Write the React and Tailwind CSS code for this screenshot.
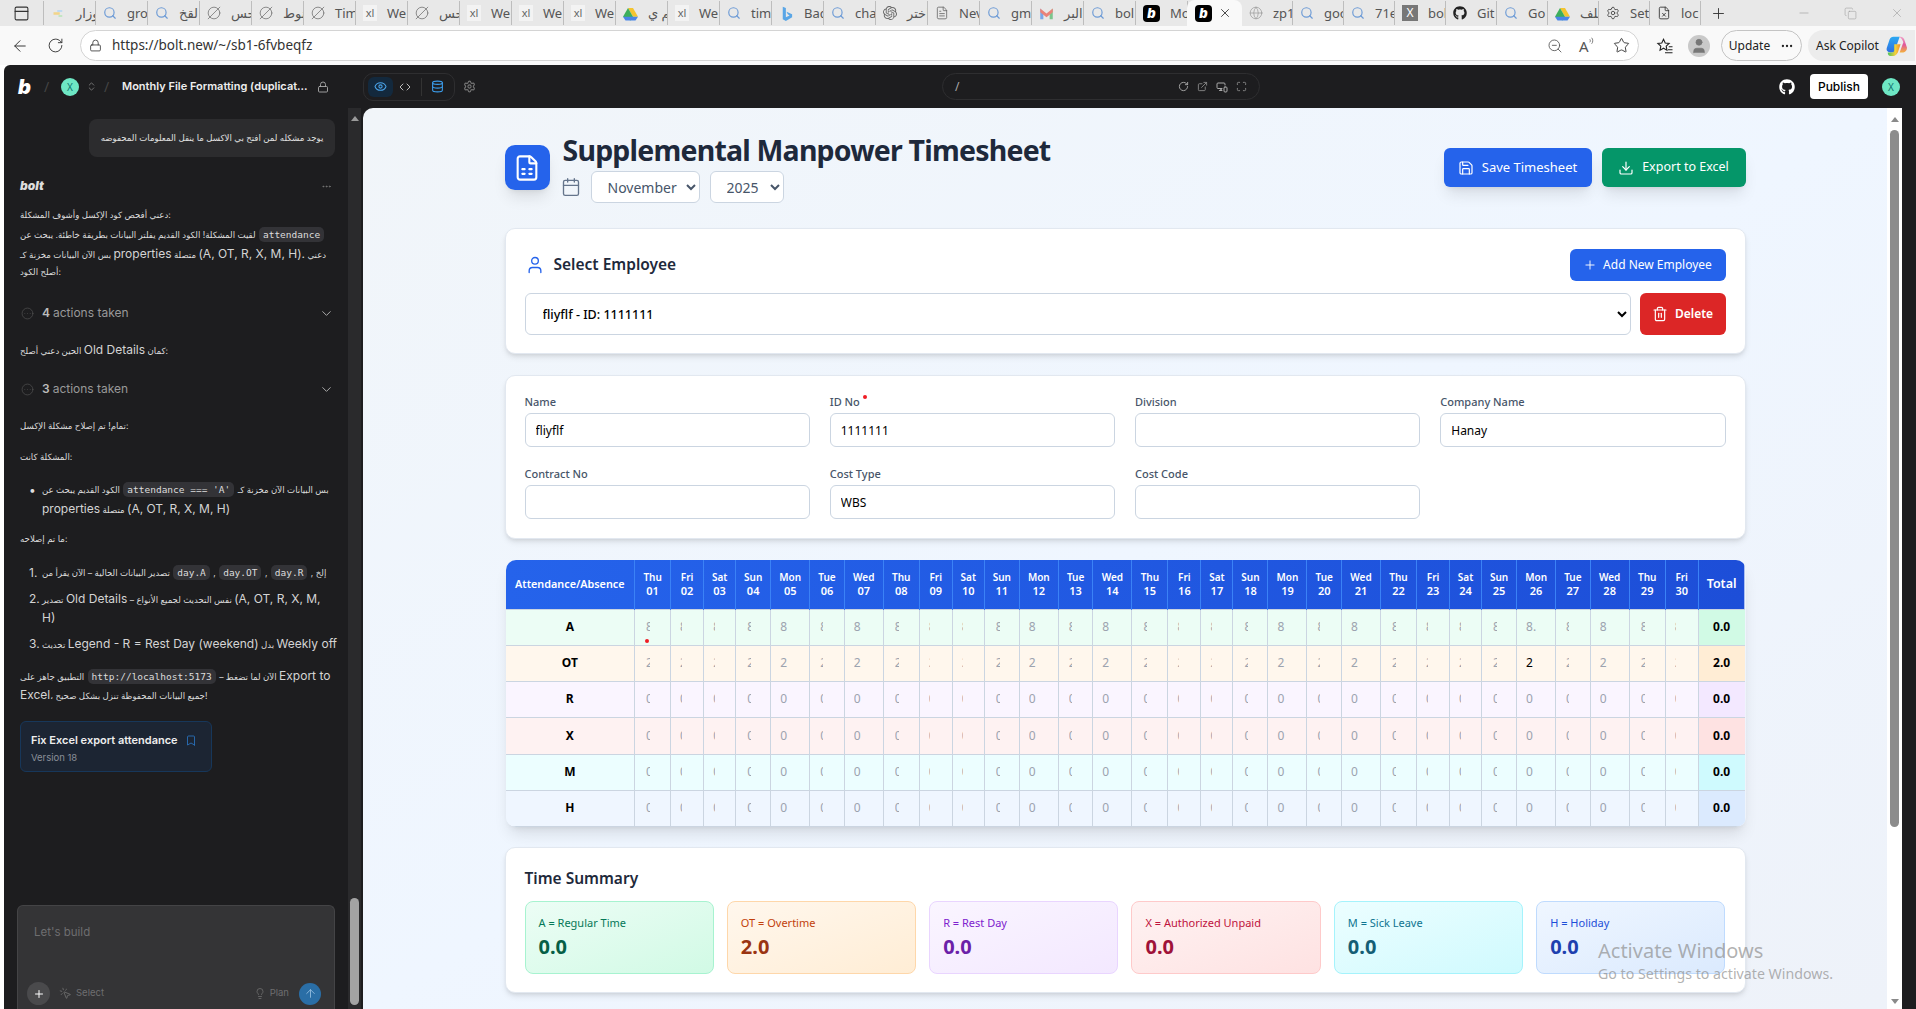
import React from 'react';
import {
  ArrowLeft, RotateCw, Lock, ZoomOut, Star, Plus, Minus, X, Copy, Search, CircleSlash2, Globe, Settings,
  FileText, FileX, PanelTop, Eye, Code, Database, ExternalLink, MonitorSmartphone, Maximize, CircleEllipsis,
  ChevronDown, ChevronsUpDown, Bookmark, MousePointerClick, Lightbulb, ArrowUp, FileSpreadsheet, Calendar,
  Save, Download, Trash2, User, MoreHorizontal,
} from 'lucide-react';
import { FaGithub } from 'react-icons/fa';
import { SiOpenai } from 'react-icons/si';

function BoltB({ className }) {
  return <span className={"font-['Inter',sans-serif] font-black italic leading-none " + className}>b</span>;
}

function Drive() {
  return (
    <svg viewBox="0 0 24 24" className="w-[15px] h-[15px] shrink-0">
      <path d="M8 3h8l8 14h-8z" fill="#f4c430" />
      <path d="M8 3l8 14-4 6-12-6z" fill="#3cae5c" />
      <path d="M0 17h24l-4 6H4z" fill="#4a85e8" />
    </svg>
  );
}
function Gmail() {
  return (
    <svg viewBox="0 0 24 24" className="w-[15px] h-[15px] shrink-0">
      <path d="M2 4v17h5V10z" fill="#7aa7e8" />
      <path d="M22 4v17h-5V10z" fill="#7cc58c" />
      <path d="M2 4l10 8 10-8v6l-10 8-10-8z" fill="#e9837a" />
    </svg>
  );
}
function Bing() {
  return (
    <svg viewBox="0 0 24 24" className="w-[15px] h-[17px] shrink-0">
      <path d="M6 1l5 2v15l6-3-3-2-2-4 9 4v5l-10 6-5-3z" fill="#5aa6e6" />
    </svg>
  );
}
function Spark() {
  return (
    <svg viewBox="0 0 24 24" className="w-[15px] h-[15px] shrink-0">
      <path d="M4 12h10" stroke="#f2d58a" strokeWidth="4" />
      <path d="M10 8h8" stroke="#bcd9f2" strokeWidth="3" />
      <path d="M12 16h6" stroke="#bfe6bf" strokeWidth="3" />
    </svg>
  );
}
function CopilotLogo() {
  return (
    <svg viewBox="0 0 24 24" className="w-[22px] h-[24px]">
      <defs>
        <linearGradient id="cpa" x1="0" y1="0" x2="0" y2="1"><stop offset="0" stopColor="#2aa8f2" /><stop offset="1" stopColor="#2f6fe0" /></linearGradient>
        <linearGradient id="cpb" x1="0" y1="0" x2="0" y2="1"><stop offset="0" stopColor="#f0a2c8" /><stop offset="0.5" stopColor="#e0579c" /><stop offset="1" stopColor="#f4b13c" /></linearGradient>
        <linearGradient id="cpc" x1="0" y1="0" x2="1" y2="0"><stop offset="0" stopColor="#45c45c" /><stop offset="0.6" stopColor="#f4d03c" /><stop offset="1" stopColor="#f08a2c" /></linearGradient>
      </defs>
      <path d="M9 2h7l-6 17H6c-3 0-5-2-4-5l3-9c1-2 2-3 4-3z" fill="url(#cpa)" />
      <path d="M14 2h3c2 0 3 1 4 3l3 9c0 3-2 5-4 5h-4l4-11c-1-3-3-6-6-6z" fill="url(#cpb)" />
      <path d="M10 10h7l-3 9c-1 2-3 4-5 4H6c-2 0-3-2-3-4h5c1 0 2-1 2-2z" fill="url(#cpc)" />
    </svg>
  );
}
function ReadAloud() {
  return (
    <div className="flex items-start w-[18px] h-[18px] text-[#555]">
      <span className="text-[15px] leading-[18px]">A</span>
      <svg viewBox="0 0 8 12" className="w-[6px] h-[9px]" fill="none" stroke="currentColor" strokeWidth="1">
        <path d="M1 3c1 1 1 3 0 4M3.5 1c2 2 2 6 0 8" />
      </svg>
    </div>
  );
}
function Favorites() {
  return (
    <svg viewBox="0 0 24 24" className="w-[18px] h-[18px] text-[#222]" fill="none" stroke="currentColor" strokeWidth="1.5">
      <path d="M10 3l2.3 5 5.2.6-3.9 3.6 1 5.3L10 15l-4.6 2.5 1-5.3L2.500 8.600 7.700 8z" />
      <path d="M17 13h5M16 17h6M12 21h10" />
    </svg>
  );
}

function TabIcon({ kind }) {
  const cl = 'w-[14px] h-[14px] shrink-0';
  if (kind === 'search') return <Search className={cl + ' text-[#6d9bd6]'} strokeWidth={2} />;
  if (kind === 'slash') return <CircleSlash2 className={cl + ' text-[#777]'} strokeWidth={1.4} />;
  if (kind === 'xl') return <span className="w-[14px] h-[16px] shrink-0 bg-[#f3f3f3] text-[#666] text-[11px] leading-[16px] text-center">xl</span>;
  if (kind === 'drive') return <Drive />;
  if (kind === 'gmail') return <Gmail />;
  if (kind === 'bing') return <Bing />;
  if (kind === 'spark') return <Spark />;
  if (kind === 'gpt') return <SiOpenai className={cl + ' text-[#666]'} />;
  if (kind === 'doc') return <FileText className={cl + ' text-[#666]'} strokeWidth={1.4} />;
  if (kind === 'globe') return <Globe className={cl + ' text-[#999]'} strokeWidth={1.2} />;
  if (kind === 'gear') return <Settings className={cl + ' text-[#444]'} strokeWidth={1.5} />;
  if (kind === 'docx') return <FileX className={cl + ' text-[#333]'} strokeWidth={1.5} />;
  if (kind === 'github') return <FaGithub className={cl + ' text-[#222]'} />;
  if (kind === 'xtile') return <span className="w-[16px] h-[16px] shrink-0 bg-[#777] text-white text-[12px] leading-[16px] text-center">X</span>;
  if (kind === 'b') return <span className="w-[17px] h-[17px] shrink-0 rounded-[4px] bg-black text-white flex items-center justify-center"><BoltB className="text-[13px]" /></span>;
  return null;
}

function Tab({ kind, text, narrow }) {
  return (
    <div className={(narrow ? 'w-[51px]' : 'w-[52px]') + ' h-[24px] shrink-0 flex items-center pl-[7px] gap-[10px] border-r border-[#bdbdbd] overflow-hidden'}>
      <TabIcon kind={kind} />
      <span className="text-[13px] leading-[18px] text-[#555] whitespace-nowrap">{text}</span>
    </div>
  );
}

const tabsA = [['spark', 'وزار'], ['search', 'gro'], ['search', 'لقخ'], ['slash', 'تحس'], ['slash', 'نوط'], ['slash', 'Tim'], ['xl', 'We'], ['slash', 'تحس'], ['xl', 'We'], ['xl', 'We'], ['xl', 'We'], ['drive', 'لم ي'], ['xl', 'We'], ['search', 'tim'], ['bing', 'Bad'], ['search', 'cha'], ['gpt', 'اختر'], ['doc', 'Nev'], ['search', 'gm'], ['gmail', 'البر'], ['search', 'bol'], ['b', 'Mo']];
const tabsB = [['globe', 'zp1'], ['search', 'goo'], ['search', '71e'], ['xtile', 'bol'], ['github', 'Git'], ['search', 'Go'], ['drive', 'ملف'], ['gear', 'Set'], ['docx', 'loc']];

function TabStrip() {
  return (
    <div className="h-[26px] bg-[#e8e8e8] flex items-center shrink-0 overflow-hidden">
      <div className="w-[44px] h-[24px] shrink-0 flex items-center justify-center border-r border-[#bdbdbd]">
        <PanelTop className="w-[17px] h-[17px] text-[#333]" strokeWidth={1.5} />
      </div>
      {tabsA.map((t, i) => <Tab key={i} kind={t[0]} text={t[1]} />)}
      <div className="w-[55px] h-[26px] shrink-0 bg-[#f9f9f9] rounded-t-[8px] flex items-center pl-[8px] -ml-[1px] gap-[6px]">
        <TabIcon kind="b" />
        <X className="w-[14px] h-[14px] text-[#333]" strokeWidth={1.5} />
      </div>
      {tabsB.map((t, i) => <Tab key={i} kind={t[0]} text={t[1]} narrow />)}
      <Plus className="ml-[9px] w-[17px] h-[17px] text-[#333] shrink-0" strokeWidth={1.3} />
      <div className="ml-auto flex items-center">
        <div className="w-[46px] flex justify-center"><Minus className="w-[14px] h-[14px] text-[#999]" strokeWidth={1} /></div>
        <div className="w-[46px] flex justify-center"><Copy className="w-[13px] h-[13px] text-[#999]" strokeWidth={1} /></div>
        <div className="w-[43px] flex justify-end pr-[12px]"><X className="w-[14px] h-[14px] text-[#999]" strokeWidth={1} /></div>
      </div>
    </div>
  );
}

function AddressBar() {
  return (
    <div className="h-[39px] bg-[#f9f9f9] flex items-center shrink-0 pl-[11px]">
      <ArrowLeft className="w-[18px] h-[18px] text-[#333]" strokeWidth={1.3} />
      <RotateCw className="ml-[18px] w-[17px] h-[17px] text-[#333]" strokeWidth={1.3} />
      <div className="ml-[16px] w-[1559px] h-[31px] bg-white rounded-full border border-[#d4d4d4] flex items-center pl-[8px] pr-[8px]">
        <Lock className="w-[13px] h-[13px] text-[#333]" strokeWidth={1.5} />
        <span className="ml-[10px] text-[13.5px] text-[#333]">https://bolt.new/~/sb1-6fvbeqfz</span>
        <div className="ml-auto flex items-center gap-[16px]">
          <ZoomOut className="w-[16px] h-[16px] text-[#555]" strokeWidth={1.3} />
          <ReadAloud />
          <Star className="w-[17px] h-[17px] text-[#333]" strokeWidth={1.3} />
        </div>
      </div>
      <div className="ml-[17px]"><Favorites /></div>
      <div className="ml-[14px] w-[22px] h-[22px] rounded-full bg-[#c9c9c9] flex items-center justify-center overflow-hidden">
        <User className="w-[18px] h-[18px] text-[#777] fill-[#777]" strokeWidth={1} />
      </div>
      <div className="ml-[11px] w-[81px] h-[31px] rounded-full border border-[#c4c4c4] flex items-center justify-center gap-[10px] shrink-0">
        <span className="text-[12px] text-[#222]">Update</span>
        <MoreHorizontal className="w-[14px] h-[14px] text-[#222]" />
      </div>
      <div className="ml-[6px] w-[107px] h-[31px] rounded-l-full bg-[#ececec] flex items-center pl-[8px] gap-[6px] shrink-0">
        <span className="text-[12px] text-[#222] whitespace-nowrap">Ask Copilot</span>
        <CopilotLogo />
      </div>
    </div>
  );
}

function TopBar() {
  return (
    <div className="h-[43px] flex items-center shrink-0 relative">
      <BoltB className="ml-[14px] text-[20px] text-white w-[17px]" />
      <span className="ml-[9px] w-[5px] text-[#444] text-[14px]">/</span>
      <div className="ml-[12px] w-[18px] h-[18px] rounded-full bg-[#6ee7c4] text-[#0f766e] text-[10px] leading-[18px] text-center">X</div>
      <ChevronsUpDown className="ml-[7px] w-[11px] h-[13px] text-[#777]" />
      <span className="ml-[7px] w-[5px] text-[#444] text-[14px]">/</span>
      <span className="ml-[13px] text-[11px] font-semibold text-[#eee] whitespace-nowrap w-[195px] font-['Inter',sans-serif]">Monthly File Formatting (duplicat...</span>
      <Lock className="w-[12px] h-[12px] text-[#aaa]" strokeWidth={1.8} />
      <div className="ml-[34px] w-[92px] h-[28px] rounded-[10px] border border-[#2e2e30] flex items-center pl-[4px]">
        <div className="w-[25px] h-[20px] rounded-[6px] bg-[#13293d] flex items-center justify-center">
          <Eye className="w-[13px] h-[13px] text-[#4aa3e8]" strokeWidth={2} />
        </div>
        <Code className="ml-[6px] w-[12px] h-[12px] text-[#bbb]" strokeWidth={2} />
        <div className="ml-[10px] w-px h-[18px] bg-[#333]" />
        <Database className="ml-[9px] w-[13px] h-[13px] text-[#3b9cea]" strokeWidth={2} />
      </div>
      <Settings className="ml-[8px] w-[13px] h-[13px] text-[#777]" strokeWidth={2} />
      <div className="ml-[466px] w-[318px] h-[27px] rounded-full border border-[#2e2e30] flex items-center pl-[12px] pr-[12px]">
        <span className="text-[#aaa] text-[12px]">/</span>
        <div className="ml-auto flex items-center gap-[8px]">
          <RotateCw className="w-[11px] h-[11px] text-[#aaa]" strokeWidth={2} />
          <ExternalLink className="w-[11px] h-[11px] text-[#888]" strokeWidth={2} />
          <MonitorSmartphone className="w-[12px] h-[12px] text-[#aaa]" strokeWidth={2} />
          <Maximize className="w-[11px] h-[11px] text-[#888]" strokeWidth={2} />
        </div>
      </div>
      <FaGithub className="ml-auto w-[16px] h-[16px] text-white" />
      <div className="ml-[15px] w-[58px] h-[25px] rounded-[4px] bg-white text-black text-[12px] leading-[25px] text-center font-medium font-['Inter',sans-serif]">Publish</div>
      <div className="ml-[14px] mr-[16px] w-[18px] h-[18px] rounded-full bg-[#6ee7c4] text-[#0f766e] text-[10px] leading-[18px] text-center">X</div>
    </div>
  );
}

function Chip({ children }) {
  return <span className="mx-[1px] px-[4px] py-[2px] rounded-[5px] bg-[#333337] text-[#dcdcdc] text-[9.5px] font-['DejaVu_Sans_Mono',monospace]">{children}</span>;
}

function L({ children, className = '' }) {
  return <div className={"h-[19px] leading-[19px] whitespace-nowrap text-[8.6px] text-[#dcdcdc] " + className}>{children}</div>;
}
function En({ children }) {
  return <span className="text-[12px] text-[#d4d4d4]">{children}</span>;
}

function Actions({ n, className }) {
  return (
    <div className={"h-[20px] flex items-center pl-[1px] pr-[2px] " + className}>
      <CircleEllipsis className="w-[13px] h-[13px] text-[#555]" strokeWidth={1.2} />
      <span className="ml-[8px] text-[12px] font-semibold text-[#bbb]">{n}</span>
      <span className="ml-[3px] text-[12px] text-[#999]">actions taken</span>
      <ChevronDown className="ml-auto w-[15px] h-[15px] text-[#aaa]" strokeWidth={1.6} />
    </div>
  );
}

function Sidebar() {
  return (
    <div className="w-[359px] shrink-0 flex font-['Inter','DejaVu_Sans',sans-serif]">
      <div className="w-[343px] pl-[16px] pr-[11px] flex flex-col">
        <div className="mt-[11px] ml-[69px] w-[246px] h-[38px] rounded-[8px] bg-[#2c2c2e] text-[#e0e0e0] text-[8.6px] leading-[38px] text-center whitespace-nowrap overflow-hidden" dir="rtl">
          يوجد مشكله لمن افتح بي الاكسل ما ينقل المعلومات المحفوضه
        </div>
        <div className="mt-[19px] h-[20px] flex items-center justify-between pr-[4px]">
          <span className="text-[12px] font-black italic text-[#ddd]">bolt</span>
          <MoreHorizontal className="w-[11px] h-[11px] text-[#777]" />
        </div>
        <div className="mt-[10px]">
          <L>دعني أفحص كود الإكسل وأشوف المشكلة:</L>
          <L>لقيت المشكلة! الكود القديم يفلتر البيانات بطريقة خاطئة. يبحث عن <Chip>attendance</Chip></L>
          <L>بس الآن البيانات مخزنة كـ <En>properties</En> متصلة <En>(A, OT, R, X, M, H).</En> دعني</L>
          <L>أصلح الكود:</L>
        </div>
        <Actions n="4" className="mt-[21px]" />
        <L className="mt-[17px]">الحين دعني أصلح <En>Old Details</En> كمان:</L>
        <Actions n="3" className="mt-[20px]" />
        <L className="mt-[18px]">تمام! تم إصلاح مشكلة الإكسل:</L>
        <L className="mt-[12px]">المشكلة كانت:</L>
        <div className="mt-[13px] flex">
          <span className="w-[22px] pl-[9px] text-[#ddd] text-[12px] leading-[19px] shrink-0">•</span>
          <div>
            <L>الكود القديم يبحث عن <Chip>attendance === 'A'</Chip> بس البيانات الآن مخزنة كـ</L>
            <L><En>properties</En> متصلة <En>(A, OT, R, X, M, H)</En></L>
          </div>
        </div>
        <L className="mt-[12px]">ما تم إصلاحه:</L>
        <div className="mt-[14px] flex">
          <En><span className="block w-[22px] pl-[9px] leading-[19px]">1.</span></En>
          <L>تصدير البيانات الحالية – الآن يقرأ من <Chip>day.A</Chip> , <Chip>day.OT</Chip> , <Chip>day.R</Chip> , إلخ</L>
        </div>
        <div className="mt-[7px] flex">
          <En><span className="block w-[22px] pl-[9px] leading-[19px]">2.</span></En>
          <div>
            <L>تصدير <En>Old Details</En> – نفس التحديث لجميع الأنواع <En>(A, OT, R, X, M,</En></L>
            <L><En>H)</En></L>
          </div>
        </div>
        <div className="mt-[7px] flex">
          <En><span className="block w-[22px] pl-[9px] leading-[19px]">3.</span></En>
          <L>تحديث <En>Legend - R = Rest Day (weekend)</En> بدل <En>Weekly off</En></L>
        </div>
        <L className="mt-[13px]">التطبيق جاهز على <Chip>http://localhost:5173</Chip> – الآن لما تضغط <En>Export to</En></L>
        <L><En>Excel</En>، جميع البيانات المحفوظة تنزل بشكل صحيح!</L>
        <div className="mt-[17px] w-[192px] h-[51px] rounded-[6px] bg-[#1c2533] border border-[#17375a] pl-[10px] pt-[10px]">
          <div className="flex items-center h-[16px]">
            <span className="text-[11px] font-semibold text-[#eee] whitespace-nowrap">Fix Excel export attendance</span>
            <Bookmark className="ml-[7px] w-[12px] h-[13px] text-[#2b79c9]" strokeWidth={1.6} />
          </div>
          <div className="mt-[3px] text-[9.5px] text-[#8a8f98]">Version 18</div>
        </div>
        <div className="mt-auto -ml-[3px] w-[318px] h-[104px] bg-[#343436] border border-[#444446] border-b-0 rounded-t-[6px] flex flex-col pl-[9px] pr-[13px]">
          <div className="mt-[18px] ml-[7px] text-[11.5px] leading-[16px] text-[#6e6e70]">Let's build</div>
          <div className="mt-auto mb-[4px] flex items-center h-[23px]">
            <div className="w-[23px] h-[23px] rounded-full bg-[#4a4a4c] flex items-center justify-center">
              <Plus className="w-[12px] h-[12px] text-white" strokeWidth={2} />
            </div>
            <MousePointerClick className="ml-[9px] w-[13px] h-[13px] text-[#777]" strokeWidth={1.4} />
            <span className="ml-[4px] text-[9.5px] text-[#6e6e70]">Select</span>
            <Lightbulb className="ml-auto w-[12px] h-[13px] text-[#777]" strokeWidth={1.4} />
            <span className="ml-[4px] text-[9.5px] text-[#6e6e70]">Plan</span>
            <div className="ml-[10px] w-[22px] h-[22px] rounded-full bg-[#2a6ea6] flex items-center justify-center">
              <ArrowUp className="w-[13px] h-[13px] text-[#9cc4e4]" strokeWidth={1.5} />
            </div>
          </div>
        </div>
      </div>
      <div className="w-[13px] ml-[1px] bg-[#2a2a2c] flex flex-col items-center relative overflow-hidden">
        <div className="mt-[8px] w-0 h-0 border-l-[4px] border-r-[4px] border-b-[5px] border-l-transparent border-r-transparent border-b-[#9a9a9a]" />
        <div className="mt-auto mb-[4px] w-[9px] h-[107px] rounded-full bg-[#a3a3a3]" />
      </div>
    </div>
  );
}

const dayNames = ['Thu', 'Fri', 'Sat', 'Sun', 'Mon', 'Tue', 'Wed'];
const colW = { Thu: 'w-[36px]', Fri: 'w-[33px]', Sat: 'w-[32px]', Sun: 'w-[35px]', Mon: 'w-[39px]', Tue: 'w-[34.5px]', Wed: 'w-[39px]' };
const inW = {
  Thu: 'ml-[11px] w-[4px]', Fri: 'ml-[9px] w-[1.5px]', Sat: 'ml-[9px] w-[1.5px]', Sun: 'ml-[11px] w-[4px]',
  Mon: 'ml-[9px] w-[10px]', Tue: 'ml-[10px] w-[3px]', Wed: 'ml-[9px] w-[10px]',
};
const days = Array.from({ length: 30 }, (_, i) => ({ name: dayNames[i % 7], num: String(i + 1).padStart(2, '0') }));
const rows = [
  { k: 'A', v: '8', bg: 'bg-[#ecfdf5]', tot: 'bg-[#d1fae5]', t: '0.0', h: 'h-[36px]' },
  { k: 'OT', v: '2', bg: 'bg-[#fff7ed]', tot: 'bg-[#ffedd5]', t: '2.0', h: 'h-[36px]' },
  { k: 'R', v: '0', bg: 'bg-[#faf5ff]', tot: 'bg-[#f3e8ff]', t: '0.0', h: 'h-[36px]' },
  { k: 'X', v: '0', bg: 'bg-[#fef2f2]', tot: 'bg-[#fee2e2]', t: '0.0', h: 'h-[37px]' },
  { k: 'M', v: '0', bg: 'bg-[#ecfeff]', tot: 'bg-[#cffafe]', t: '0.0', h: 'h-[36px]' },
  { k: 'H', v: '0', bg: 'bg-[#eff6ff]', tot: 'bg-[#dbeafe]', t: '0.0', h: 'h-[36px]' },
];

function DayInput({ row, day, idx }) {
  const black = row.k === 'OT' && idx === 25;
  const val = row.k === 'A' && idx === 25 ? '8.0' : row.v;
  return (
    <input
      readOnly
      value={val}
      className={inW[day.name] + ' block h-[18px] bg-transparent outline-none text-[12px] p-0 ' + (black ? 'text-black' : 'text-[#9ca3af]')}
    />
  );
}

function Timesheet() {
  return (
    <div className="ml-[1px] rounded-[10px] overflow-hidden shadow-lg">
      <table className="table-fixed w-[1239px] border-collapse">
        <thead>
          <tr className="h-[49px] bg-linear-to-r from-[#2563eb] to-[#1d4ed8] text-white">
            <th className="w-[129px] text-[10.8px] font-semibold border-r border-[#3b82f6]">Attendance/Absence</th>
            {days.map((d, i) => (
              <th key={i} className={colW[d.name] + ' border-r border-[#3b82f6] text-[10px] leading-[13px] font-semibold'}>
                <div>{d.name}</div>
                <div className="text-[11px] leading-[14px]">{d.num}</div>
              </th>
            ))}
            <th className="w-[46px] text-[12.5px] font-semibold">Total</th>
          </tr>
        </thead>
        <tbody>
          {rows.map((r) => (
            <tr key={r.k} className={r.h + ' ' + r.bg}>
              <td className="border border-[#cbd5e1] border-l-0 text-center text-[12px] font-bold text-black">{r.k}</td>
              {days.map((d, i) => (
                <td key={i} className="border border-[#cbd5e1] p-0 relative">
                  <DayInput row={r} day={d} idx={i} />
                  {r.k === 'A' && i === 0 && <span className="absolute left-[10px] bottom-[2px] w-[4px] h-[4px] rounded-full bg-[#ef1c24]" />}
                </td>
              ))}
              <td className={'border border-[#cbd5e1] border-r-0 text-center text-[12px] font-bold text-black ' + r.tot}>{r.t}</td>
            </tr>
          ))}
        </tbody>
      </table>
    </div>
  );
}

function Field({ label, value, req }) {
  return (
    <div className="flex flex-col">
      <div className="h-[16px] leading-[16px] text-[11px] text-[#475569] font-medium relative">
        {label}
        {req && <span className="inline-block align-top ml-[3px] mt-[1px] w-[4px] h-[4px] rounded-full bg-[#ef1c24]" />}
      </div>
      <input readOnly value={value} className="mt-[3px] h-[34px] w-full rounded-[6px] border border-[#cbd5e1] bg-white pl-[10px] pt-[1px] text-[12px] text-black outline-none" />
    </div>
  );
}

function Stat({ label, value, card, lab, val }) {
  return (
    <div className={'h-[73px] rounded-[8px] border pl-[13px] pt-[13px] bg-linear-to-br ' + card}>
      <div className={'text-[11px] leading-[16px] whitespace-nowrap ' + lab}>{label}</div>
      <div className={'mt-[2px] text-[20px] leading-[28px] font-bold ' + val}>{value}</div>
    </div>
  );
}

function Preview() {
  return (
    <div className="flex-1 min-w-0 flex rounded-tl-[10px] overflow-hidden">
      <div className="flex-1 min-w-0 bg-linear-to-br from-[#f1f5f9] via-[#eff6ff] to-[#eef2f9]">
        <div className="w-[1241px] mx-auto pt-[24px] font-['Noto_Sans',sans-serif]">
          <div className="flex items-center h-[71px] mb-[25px]">
            <div className="w-[45px] h-[45px] rounded-[10px] bg-[#2563eb] shadow-lg flex items-center justify-center shrink-0">
              <FileSpreadsheet className="w-[28px] h-[28px] text-white" strokeWidth={1.8} />
            </div>
            <div className="ml-[13px]">
              <div className="text-[28.5px] leading-[36px] font-bold text-[#1e293b] whitespace-nowrap tracking-[-0.8px]">Supplemental Manpower Timesheet</div>
              <div className="mt-[3px] flex items-center">
                <Calendar className="-ml-[2px] w-[20px] h-[20px] text-[#64748b]" strokeWidth={1.6} />
                <select defaultValue="November" className="ml-[10px] w-[109px] h-[32px] rounded-[6px] border border-[#cbd5e1] bg-white pl-[12px] text-[14px] text-[#475569] outline-none">
                  <option>November</option>
                </select>
                <select defaultValue="2025" className="ml-[10px] w-[74px] h-[32px] rounded-[6px] border border-[#cbd5e1] bg-white pl-[12px] text-[14px] text-[#475569] outline-none">
                  <option>2025</option>
                </select>
              </div>
            </div>
            <div className="ml-auto flex items-center gap-[10px]">
              <div className="w-[148px] h-[39px] rounded-[6px] bg-[#2563eb] shadow-lg flex items-center justify-center gap-[8px] text-white text-[13px]">
                <Save className="w-[16px] h-[16px]" strokeWidth={1.8} />Save Timesheet
              </div>
              <div className="w-[144px] h-[39px] rounded-[6px] bg-[#059669] shadow-lg flex items-center justify-center gap-[8px] text-white text-[12.5px]">
                <Download className="w-[16px] h-[16px]" strokeWidth={1.8} />Export to Excel
              </div>
            </div>
          </div>

          <div className="h-[126px] rounded-[10px] bg-white border border-slate-200 shadow-md px-[19px] pt-[20px] mb-[21px]">
            <div className="h-[32px] flex items-center">
              <User className="w-[20px] h-[20px] text-[#2563eb]" strokeWidth={1.6} />
              <span className="ml-[9px] text-[15.5px] font-semibold text-[#1e293b]">Select Employee</span>
              <div className="ml-auto w-[156px] h-[32px] rounded-[6px] bg-[#2563eb] flex items-center justify-center gap-[6px] text-white text-[12px]">
                <Plus className="w-[14px] h-[14px]" strokeWidth={1.6} />Add New Employee
              </div>
            </div>
            <div className="mt-[12px] flex items-center">
              <select defaultValue="a" className="flex-1 h-[42px] rounded-[6px] border border-[#cbd5e1] bg-white pl-[13px] text-[12.5px] font-medium text-black outline-none">
                <option value="a">fliyflf - ID: 1111111</option>
              </select>
              <div className="ml-[9px] w-[86px] h-[42px] rounded-[6px] bg-[#dc2626] flex items-center justify-center gap-[7px] text-white text-[12px] font-semibold">
                <Trash2 className="w-[16px] h-[16px]" strokeWidth={1.8} />Delete
              </div>
            </div>
          </div>

          <div className="h-[164px] rounded-[10px] bg-white border border-slate-200 shadow-md px-[19px] pt-[18px] mb-[21px] grid grid-cols-4 gap-x-[20px] gap-y-[19px] content-start">
            <Field label="Name" value="fliyflf" />
            <Field label="ID No" value="1111111" req />
            <Field label="Division" value="" />
            <Field label="Company Name" value="Hanay" />
            <Field label="Contract No" value="" />
            <Field label="Cost Type" value="WBS" />
            <Field label="Cost Code" value="" />
          </div>

          <div className="mb-[20px]"><Timesheet /></div>

          <div className="h-[146px] rounded-[10px] bg-white border border-slate-200 shadow-md px-[19px] pt-[18px]">
            <div className="h-[25px] leading-[25px] text-[15.5px] font-semibold text-[#1e293b]">Time Summary</div>
            <div className="mt-[10px] grid grid-cols-6 gap-x-[13px]">
              <Stat label="A = Regular Time" value="0.0" card="from-[#ecfdf5] to-[#d1fae5] border-[#a7f3d0]" lab="text-[#047857]" val="text-[#065f46]" />
              <Stat label="OT = Overtime" value="2.0" card="from-[#fff7ed] to-[#ffedd5] border-[#fed7aa]" lab="text-[#c2410c]" val="text-[#9a3412]" />
              <Stat label="R = Rest Day" value="0.0" card="from-[#faf5ff] to-[#f3e8ff] border-[#e9d5ff]" lab="text-[#7e22ce]" val="text-[#6b21a8]" />
              <Stat label="X = Authorized Unpaid" value="0.0" card="from-[#fef2f2] to-[#fee2e2] border-[#fecaca]" lab="text-[#be123c]" val="text-[#9f1239]" />
              <Stat label="M = Sick Leave" value="0.0" card="from-[#ecfeff] to-[#cffafe] border-[#a5f3fc]" lab="text-[#0e7490]" val="text-[#155e75]" />
              <Stat label="H = Holiday" value="0.0" card="from-[#eff6ff] to-[#dbeafe] border-[#bfdbfe]" lab="text-[#1d4ed8]" val="text-[#1e40af]" />
            </div>
          </div>
        </div>
      </div>
      <div className="w-[15px] shrink-0 bg-white flex flex-col items-center">
        <div className="mt-[9px] w-0 h-0 border-l-[4px] border-r-[4px] border-b-[5px] border-l-transparent border-r-transparent border-b-[#8a8a8a]" />
        <div className="mt-[8px] w-[9px] h-[697px] rounded-full bg-[#8c8c8c]" />
        <div className="mt-auto mb-[5px] w-0 h-0 border-l-[4px] border-r-[4px] border-t-[5px] border-l-transparent border-r-transparent border-t-[#8a8a8a]" />
      </div>
    </div>
  );
}

export default function App() {
  return (
    <div className="w-[1916px] h-[1009px] overflow-hidden flex flex-col bg-white relative font-['Noto_Sans','DejaVu_Sans',sans-serif]">
      <TabStrip />
      <AddressBar />
      <div className="flex-1 min-h-0 ml-[4px] bg-[#1d1d1f] rounded-tl-[6px] flex flex-col">
        <TopBar />
        <div className="flex-1 min-h-0 flex pr-[14px]">
          <Sidebar />
          <Preview />
        </div>
      </div>
      <div className="absolute left-[1598px] top-[937px] pointer-events-none text-[#8f8f8f]/70">
        <div className="text-[20px] leading-[27px]">Activate Windows</div>
        <div className="text-[14.2px] leading-[19px]">Go to Settings to activate Windows.</div>
      </div>
    </div>
  );
}
